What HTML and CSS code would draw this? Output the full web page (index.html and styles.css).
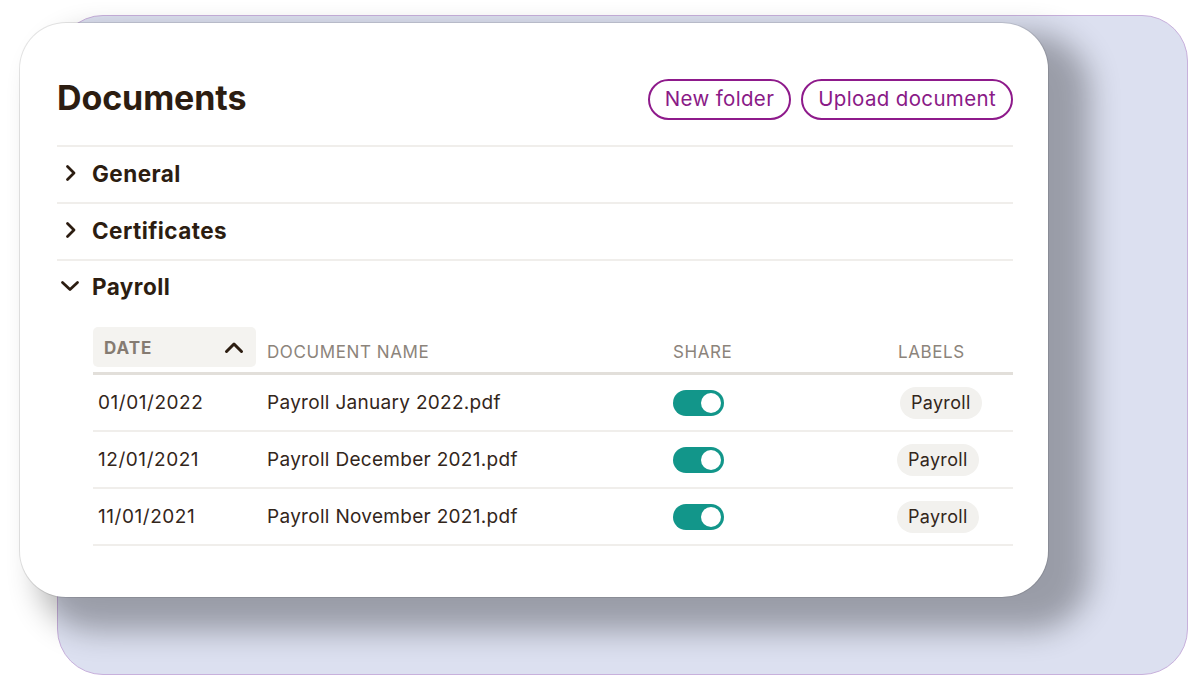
FILE: index.html
```html
<!DOCTYPE html>
<html lang="en">
<head>
<meta charset="utf-8">
<title>Documents</title>
<link rel="stylesheet" href="styles.css">
</head>
<body>
<div class="stage">
  <div class="back-card"></div>
  <section class="card">
    <header class="card-head">
      <h1 class="title">Documents</h1>
      <div class="actions">
        <button class="btn">New folder</button>
        <button class="btn">Upload document</button>
      </div>
    </header>

    <div class="folder">
      <svg class="chev" viewBox="0 0 16 18" width="16" height="18"><path d="M4.5 2.5 L11 9 L4.5 15.5" fill="none" stroke="currentColor" stroke-width="2.8" stroke-linecap="round" stroke-linejoin="round"/></svg>
      <span>General</span>
    </div>
    <div class="folder">
      <svg class="chev" viewBox="0 0 16 18" width="16" height="18"><path d="M4.5 2.5 L11 9 L4.5 15.5" fill="none" stroke="currentColor" stroke-width="2.8" stroke-linecap="round" stroke-linejoin="round"/></svg>
      <span>Certificates</span>
    </div>
    <div class="folder open">
      <svg class="chev" viewBox="0 0 20 14" width="20" height="14"><path d="M2.5 3.5 L10 10.5 L17.5 3.5" fill="none" stroke="currentColor" stroke-width="2.8" stroke-linecap="round" stroke-linejoin="round"/></svg>
      <span>Payroll</span>
    </div>

    <div class="table">
      <div class="thead">
        <div class="th sorted">
          <span>DATE</span>
          <svg class="caret" viewBox="0 0 20 13" width="20" height="13"><path d="M2.5 10.5 L10 3 L17.5 10.5" fill="none" stroke="currentColor" stroke-width="3" stroke-linecap="round" stroke-linejoin="round"/></svg>
        </div>
        <div class="th">DOCUMENT NAME</div>
        <div class="th">SHARE</div>
        <div class="th">LABELS</div>
      </div>
      <div class="tr">
        <div class="td date">01/01/2022</div>
        <div class="td">Payroll January 2022.pdf</div>
        <div class="td"><span class="toggle"><span class="knob"></span></span></div>
        <div class="td label first"><span class="pill">Payroll</span></div>
      </div>
      <div class="tr">
        <div class="td date">12/01/2021</div>
        <div class="td">Payroll December 2021.pdf</div>
        <div class="td"><span class="toggle"><span class="knob"></span></span></div>
        <div class="td label"><span class="pill">Payroll</span></div>
      </div>
      <div class="tr">
        <div class="td date">11/01/2021</div>
        <div class="td">Payroll November 2021.pdf</div>
        <div class="td"><span class="toggle"><span class="knob"></span></span></div>
        <div class="td label"><span class="pill">Payroll</span></div>
      </div>
    </div>
  </section>
</div>
</body>
</html>
```

FILE: styles.css
```css
* { box-sizing: border-box; }

html, body {
  margin: 0;
  padding: 0;
  background: #ffffff;
}

body {
  width: 1200px;
  height: 694px;
  overflow: hidden;
  font-family: Inter, "Noto Sans", "Liberation Sans", sans-serif;
  color: #33261b;
}

.stage {
  position: relative;
  width: 1200px;
  height: 694px;
}

.back-card {
  position: absolute;
  left: 57px;
  top: 15px;
  width: 1131px;
  height: 660px;
  border-radius: 46px;
  background: #dce0f0;
  border: 1px solid #c8b0dc;
}

.card {
  position: absolute;
  left: 20px;
  top: 23px;
  width: 1028px;
  height: 574px;
  border-radius: 46px;
  background: #ffffff;
  box-shadow: 0 0 0 1px rgba(0, 0, 0, 0.10), 30px 22px 30px 12px rgba(0, 0, 0, 0.30);
  padding: 56px 35px 0 37px;
}

.card-head {
  display: flex;
  align-items: center;
  justify-content: space-between;
  height: 41px;
  margin-bottom: 25px;
}

.title {
  margin: 0;
  font-size: 34px;
  font-weight: 700;
  color: #2c1d11;
  letter-spacing: -0.1px;
  line-height: 1;
  position: relative;
  top: -2px;
}

.actions {
  display: flex;
  gap: 10px;
}

.btn {
  height: 41px;
  padding: 0 15px;
  border: 2.5px solid #8e1a8b;
  border-radius: 21px;
  background: #fff;
  color: #8a1a87;
  font-family: Inter, "Noto Sans", "Liberation Sans", sans-serif;
  font-size: 20.5px;
  letter-spacing: 0.35px;
  font-weight: 400;
  line-height: 1;
}

.folder {
  display: flex;
  align-items: center;
  height: 57px;
  padding-bottom: 3px;
  border-top: 2px solid #f0eeeb;
  font-size: 22.5px;
  font-weight: 700;
  color: #2c1d11;
  letter-spacing: 0.45px;
}

.folder.open {
  padding-bottom: 5px;
}

.folder .chev {
  margin-left: 6px;
  margin-right: 13px;
  color: #2c1d11;
}

.folder.open .chev {
  margin-left: 3px;
  margin-right: 12px;
}

.table {
  margin-left: 36px;
  margin-top: 11px;
}

.thead,
.tr {
  display: grid;
  grid-template-columns: 163px 406px 225px 1fr;
  align-items: center;
}

.thead {
  padding-bottom: 5px;
  border-bottom: 3px solid #e2dfda;
}

.th {
  height: 40px;
  display: flex;
  align-items: center;
  padding-left: 11px;
  padding-top: 10px;
  font-size: 17px;
  color: #8c847b;
  letter-spacing: 0.6px;
}

.th.sorted {
  padding-top: 0;
  justify-content: space-between;
  padding-right: 12px;
  background: #f4f3f0;
  border-radius: 5px;
  font-weight: 700;
  color: #857b72;
  letter-spacing: 1px;
}

.th.sorted span {
  position: relative;
  top: 1px;
}

.caret {
  color: #2c1d11;
}

.tr {
  height: 57px;
  border-bottom: 2px solid #f0eeeb;
}

.td {
  padding-left: 11px;
  font-size: 19px;
  color: #33261b;
  letter-spacing: 0.3px;
  display: flex;
  align-items: center;
}

.td.date {
  padding-left: 5px;
  letter-spacing: 0.55px;
}

.toggle {
  display: inline-flex;
  align-items: center;
  justify-content: flex-end;
  width: 51px;
  height: 26px;
  border-radius: 13px;
  background: #12968a;
  padding-right: 3px;
}

.knob {
  width: 20px;
  height: 20px;
  border-radius: 50%;
  background: #ffffff;
}

.td.label {
  padding-left: 10px;
}

.td.label.first {
  padding-left: 13px;
}

.pill {
  display: inline-flex;
  align-items: center;
  height: 32px;
  padding: 0 11px;
  border-radius: 16px;
  background: #f2f1ee;
  font-size: 18px;
  letter-spacing: 0.3px;
  color: #33261b;
}
```
